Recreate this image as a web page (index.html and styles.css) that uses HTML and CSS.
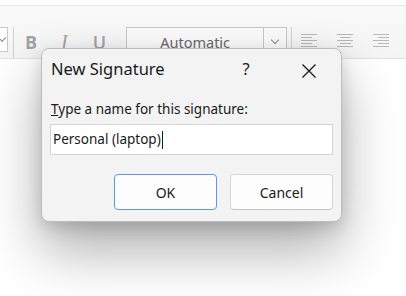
FILE: index.html
```html
<!DOCTYPE html>
<html lang="en">
  <head>
    <meta charset="utf-8">
    <title>New Signature</title>
    <link rel="stylesheet" href="styles.css">
  </head>
  <body>
    <div class='window'>
        <div class='topstrip'></div>
        <div class='toolbar'>
            <div class='prevbox'><span class='chev'></span></div>
            <div class='sep'></div>
            <div class='fmt bold'>B</div>
            <div class='fmt italic'>I</div>
            <div class='fmt under'>U</div>
            <div class='combo'>
                <div class='combo-text'>Automatic</div>
                <div class='combo-btn'><span class='chev'></span></div>
            </div>
            <div class='sep sep2'></div>
            <div class='align left'><i></i><i></i><i></i><i></i><i></i></div>
            <div class='align center'><i></i><i></i><i></i><i></i><i></i></div>
            <div class='align right'><i></i><i></i><i></i><i></i><i></i></div>
        </div>
        <div class='editor'></div>

        <div class='dialog'>
            <div class='titlebar'>
                <div class='title'>New Signature</div>
                <div class='help'>?</div>
                <div class='close'>
                    <svg width="16" height="16" viewBox="0 0 16 16">
                        <path d="M1.5 1.5 L14.5 14.5 M14.5 1.5 L1.5 14.5" stroke="#1a1a1a" stroke-width="1.3" fill="none"/>
                    </svg>
                </div>
            </div>
            <div class='body'>
                <div class='label'><u>T</u>ype a name for this signature:</div>
                <div class='field'>Personal (laptop)<span class='caret'></span></div>
                <div class='buttons'>
                    <div class='btn ok'>OK</div>
                    <div class='btn'>Cancel</div>
                </div>
            </div>
        </div>
    </div>
  </body>
</html>
```

FILE: styles.css
```css
body {
    margin: 0;
    background-color: #ffffff;
    font-family: "Noto Sans", "Open Sans", sans-serif;
    color: #1a1a1a;
}
.window {
    position: relative;
    width: 406px;
    height: 296px;
    overflow: hidden;
    background-color: #ffffff;
}
.topstrip {
    height: 5px;
    border-bottom: 1px solid #e6e6e6;
}
.toolbar {
    height: 53px;
    box-sizing: border-box;
    padding-top: 21px;
    display: flex;
    align-items: flex-start;
    background: linear-gradient(#fafafa, #f4f4f4);
    border-bottom: 1px solid #e3e3e3;
}
.chev {
    display: block;
    width: 5px;
    height: 5px;
    border-right: 1px solid #8a8a8a;
    border-bottom: 1px solid #8a8a8a;
    transform: rotate(45deg);
}
.prevbox {
    width: 9px;
    height: 25px;
    margin-left: -1px;
    box-sizing: border-box;
    border: 1px solid #c9c9c9;
    background-color: #ffffff;
    display: flex;
    align-items: center;
    justify-content: flex-end;
    padding-right: 2px;
    padding-bottom: 3px;
}
.sep {
    width: 1px;
    height: 31px;
    margin-left: 5px;
    background-color: #d2d2d2;
}
.fmt {
    font-family: "Open Sans", sans-serif;
    font-size: 18px;
    line-height: 22px;
    margin-top: 4px;
    color: #a3a3a3;
}
.bold {
    font-weight: bold;
    margin-left: 11px;
}
.italic {
    font-family: "Liberation Serif", serif;
    font-style: italic;
    font-size: 20px;
    margin-left: 24px;
}
.under {
    font-weight: 600;
    text-decoration: underline;
    text-underline-offset: 2px;
    margin-left: 25px;
}
.combo {
    margin-left: 20px;
    width: 161px;
    height: 34px;
    box-sizing: border-box;
    border: 1px solid #c8c8c8;
    background-color: #fbfbfb;
    display: flex;
}
.combo-text {
    flex: 1;
    text-align: center;
    font-size: 14.5px;
    line-height: 18px;
    color: #6a6a6a;
    padding-top: 5px;
}
.combo-btn {
    width: 23px;
    border-left: 1px solid #c8c8c8;
    display: flex;
    justify-content: center;
    padding-top: 9px;
    box-sizing: border-box;
}
.sep2 {
    margin-left: 4px;
}
.align {
    width: 16px;
    display: flex;
    flex-direction: column;
    gap: 2px;
    margin-top: 7px;
    margin-left: 20px;
}
.align i {
    display: block;
    width: 16px;
    height: 1px;
    background-color: #b8b8b8;
}
.align i:nth-child(even) {
    width: 11px;
}
.align.left {
    margin-left: 9px;
}
.align.center {
    align-items: center;
}
.align.right {
    align-items: flex-end;
}
.editor {
    height: 230px;
}
.dialog {
    position: absolute;
    left: 41px;
    top: 48px;
    width: 301px;
    height: 174px;
    box-sizing: border-box;
    border: 1px solid #bdbdbd;
    border-radius: 8px;
    background-color: #f3f3f3;
    box-shadow: 0 28px 56px rgba(0,0,0,0.32), 0 6px 16px rgba(0,0,0,0.14);
}
.titlebar {
    height: 40px;
    display: flex;
    align-items: center;
    padding-left: 9px;
    padding-right: 9px;
}
.title {
    font-size: 16.5px;
    flex: 1;
    padding-bottom: 1px;
}
.help {
    font-size: 16.5px;
    width: 20px;
    text-align: center;
    margin-right: 30px;
    padding-bottom: 1px;
}
.close {
    width: 46px;
    display: flex;
    justify-content: center;
    padding-top: 3px;
}
.body {
    padding: 11px 8px 0 8px;
}
.label {
    font-size: 13.5px;
    padding-left: 1px;
    line-height: 18px;
}
.field {
    margin-top: 6px;
    height: 31px;
    box-sizing: border-box;
    border: 1px solid #d4d4d4;
    background-color: #ffffff;
    font-size: 13.5px;
    line-height: 29px;
    padding-left: 2px;
    display: flex;
    align-items: center;
}
.caret {
    display: inline-block;
    width: 1px;
    height: 18px;
    background-color: #1a1a1a;
    margin-left: 1px;
}
.buttons {
    margin-top: 19px;
    display: flex;
    justify-content: flex-end;
    gap: 13px;
}
.btn {
    width: 103px;
    height: 36px;
    box-sizing: border-box;
    border: 1px solid #d6d6d6;
    border-bottom-color: #c4c4c4;
    border-radius: 4px;
    background-color: #fdfdfd;
    font-size: 14px;
    display: flex;
    align-items: center;
    justify-content: center;
}
.ok {
    border: 1px solid #5a9ad9;
}
```
